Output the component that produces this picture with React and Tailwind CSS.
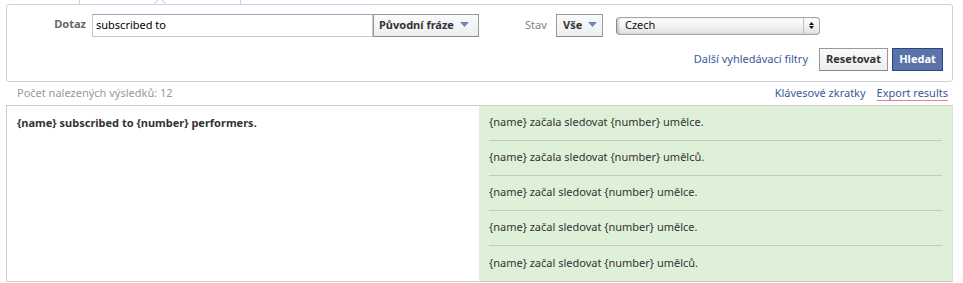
import { useState } from 'react';

const font = { fontFamily: '"Noto Sans", "DejaVu Sans", sans-serif' };

const translations = [
  '{name} začala sledovat {number} umělce.',
  '{name} začala sledovat {number} umělců.',
  '{name} začal sledovat {number} umělce.',
  '{name} začal sledovat {number} umělce.',
  '{name} začal sledovat {number} umělců.',
];

const Caret = () => (
  <svg width="9" height="5" viewBox="0 0 9 5" className="ml-[6px] shrink-0">
    <path d="M0 0h9L4.5 5z" fill="#6d84b4" />
  </svg>
);

const App = () => {
  const [query, setQuery] = useState('subscribed to');

  return (
    <div
      className="w-[963px] h-[283px] overflow-hidden bg-white text-[11px] text-[#333] leading-none"
      style={font}
    >
      {/* tab stubs */}
      <div className="flex h-[4px] pl-[79px]">
        <div className="relative w-[162px] h-[4px] border-x border-[#ccd0d9]">
          <div className="absolute left-[76px] top-[-1px] w-[8px] h-[8px] rotate-45 bg-white border-l border-t border-[#ccd0d9]" />
        </div>
      </div>

      {/* search panel */}
      <div className="relative ml-[6px] mr-[10px] h-[78px] border border-[#ccd0d9] rounded-[3px] bg-white">
        <div className="flex items-center mt-[9px] h-[23px] whitespace-nowrap">
          <label className="w-[79px] text-right font-bold text-[#666] -mt-[5px]">Dotaz</label>
          <input
            value={query}
            onChange={(e) => setQuery(e.target.value)}
            className="ml-[6px] w-[281px] h-[23px] border border-[#bdc7d8] border-t-[#9aa6bd] px-[3px] pb-[2px] text-[11px] text-[#000] outline-none"
            style={font}
          />
          <button className="flex items-center w-[106px] h-[23px] border border-[#999] border-b-[#888] bg-gradient-to-b from-[#fafafa] to-[#eceef2] px-[5px] pb-[2px] font-bold text-[#333]">
            Původní fráze
            <Caret />
          </button>
          <span className="ml-[46px] w-[24px] pb-[2px] text-[#808080]">Stav</span>
          <button className="ml-[7px] flex items-center w-[47px] h-[23px] border border-[#999] border-b-[#888] bg-gradient-to-b from-[#fafafa] to-[#eceef2] px-[6px] pb-[2px] font-bold text-[#333]">
            Vše
            <Caret />
          </button>
          <div className="ml-[13px] flex items-center w-[204px] h-[18px] rounded-[4px] border border-[#a5a5a5] border-l-[#888] bg-gradient-to-b from-[#ffffff] via-[#f2f2f2] to-[#e2e2e2] shadow-[inset_2px_0_2px_rgba(0,0,0,0.15)]">
            <span className="flex-1 pl-[8px] pb-[2px] text-[#111]">Czech</span>
            <div className="flex flex-col items-center justify-center gap-[1px] w-[16px] h-full border-l border-[#bdbdbd]">
              <svg width="5" height="3" viewBox="0 0 5 3">
                <path d="M0 3h5L2.5 0z" fill="#111" />
              </svg>
              <svg width="5" height="3" viewBox="0 0 5 3">
                <path d="M0 0h5L2.5 3z" fill="#111" />
              </svg>
            </div>
          </div>
        </div>

        <div className="flex items-center justify-end mt-[11px] pr-[9px] whitespace-nowrap">
          <a href="#" className="text-[#3b5998] mr-[11px] pb-[2px]">Další vyhledávací filtry</a>
          <button className="w-[69px] h-[23px] border border-[#999] border-b-[#888] bg-gradient-to-b from-[#fafafa] to-[#eceef2] pb-[2px] font-bold text-[#333]">
            Resetovat
          </button>
          <button className="ml-[4px] w-[51px] h-[23px] border border-[#29447e] bg-[#5b74a8] pb-[2px] font-bold text-white">
            Hledat
          </button>
        </div>
      </div>

      {/* results header */}
      <div className="flex items-center justify-between h-[23px] pl-[17px] pr-[15px] pb-[2px]">
        <span className="text-[#999]">Počet nalezených výsledků: 12</span>
        <div className="flex gap-[11px]">
          <a href="#" className="text-[#3b5998]">Klávesové zkratky</a>
          <a href="#" className="text-[#3b5998] underline decoration-[#f08080] underline-offset-[3px]">Export results</a>
        </div>
      </div>

      {/* results table */}
      <div className="flex ml-[6px] mr-[10px] border border-[#ccc] border-r-[#ddd]">
        <div className="w-[472px] pl-[10px] pt-[11px] font-bold">
          {'{name} subscribed to {number} performers.'}
        </div>
        <div className="flex-1 bg-[#dff0d8] px-[10px]">
          {translations.map((t, i) => (
            <div
              key={i}
              className={`flex items-center h-[35px] pb-[3px] ${i < translations.length - 1 ? 'border-b border-[#c4c8c4]' : ''}`}
            >
              {t}
            </div>
          ))}
        </div>
      </div>
    </div>
  );
};

export default App;
